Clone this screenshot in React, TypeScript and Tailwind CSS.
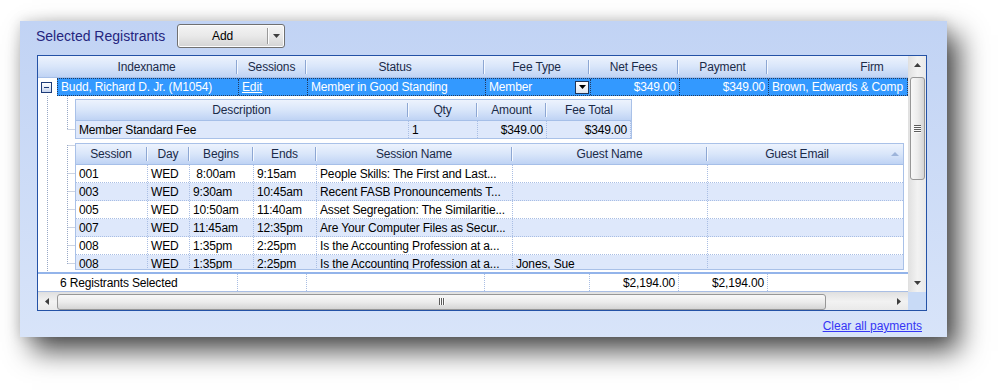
import React from 'react';

type Col = { label: string; w: string; sort?: boolean; right?: boolean };

const mainCols: Col[] = [
  { label: 'Indexname', w: 'w-[181px]' },
  { label: 'Sessions', w: 'w-[69px]' },
  { label: 'Status', w: 'w-[178px]' },
  { label: 'Fee Type', w: 'w-[105px]' },
  { label: 'Net Fees', w: 'w-[89px]', right: true },
  { label: 'Payment', w: 'w-[89px]', right: true },
  { label: 'Firm', w: 'w-[208px]' },
];

const feeCols: Col[] = [
  { label: 'Description', w: 'w-[333px]' },
  { label: 'Qty', w: 'w-[69px]' },
  { label: 'Amount', w: 'w-[69px]', right: true },
  { label: 'Fee Total', w: 'w-[84px]', right: true },
];

const sessionCols: Col[] = [
  { label: 'Session', w: 'w-[72px]' },
  { label: 'Day', w: 'w-[42px]' },
  { label: 'Begins', w: 'w-[64px]' },
  { label: 'Ends', w: 'w-[63px]' },
  { label: 'Session Name', w: 'w-[196px]' },
  { label: 'Guest Name', w: 'w-[195px]' },
  { label: 'Guest Email', w: 'w-[196px]', sort: true },
];

const sessions = [
  ['001', 'WED', '\u00a08:00am', '9:15am', 'People Skills: The First and Last...', ''],
  ['003', 'WED', '9:30am', '10:45am', 'Recent FASB Pronouncements T...', ''],
  ['005', 'WED', '10:50am', '11:40am', 'Asset Segregation: The Similaritie...', ''],
  ['007', 'WED', '11:45am', '12:35pm', 'Are Your Computer Files as Secur...', ''],
  ['008', 'WED', '1:35pm', '2:25pm', 'Is the Accounting Profession at a...', ''],
  ['008', 'WED', '1:35pm', '2:25pm', 'Is the Accounting Profession at a...', 'Jones, Sue'],
];

const HeaderRow = ({ cols, height }: { cols: Col[]; height: string }) => (
  <div className={`flex shrink-0 ${height} bg-gradient-to-b from-[#edf3fd] via-[#d9e6fa] to-[#bfd3f4] border-b border-[#a6bfe8] text-[#1b2b49]`}>
    {cols.map((c, i) => (
      <div key={c.label} className={`${c.w} shrink-0 flex items-center`}>
        <span className="flex-1 text-center whitespace-nowrap overflow-hidden">{c.label}</span>
        {c.sort && (
          <span className="w-[18px] shrink-0 flex items-center justify-center">
            <svg width="8" height="4" viewBox="0 0 8 4"><path d="M0 4 L4 0 L8 4 Z" fill="#9db4da" /></svg>
          </span>
        )}
        {i < cols.length - 1 && (
          <span className="w-[2px] h-[14px] shrink-0 border-l border-l-[#8da7d3] border-r border-r-[#f5f9ff]" />
        )}
      </div>
    ))}
  </div>
);

const Cell = ({ w, right, children, cls = 'border-[#a9bee4]' }: { w: string; right?: boolean; children?: React.ReactNode; cls?: string }) => (
  <div className={`${w} shrink-0 h-full flex items-center overflow-hidden whitespace-nowrap border-r border-dotted ${cls} ${right ? 'justify-end pr-[3px]' : 'pl-[3px]'}`}>
    {children}
  </div>
);

const TreeLines = () => (
  <svg width="37" height="176" className="shrink-0">
    <g stroke="#98a8c6" strokeWidth="1" strokeDasharray="1 1">
      <line x1="9.5" y1="0" x2="9.5" y2="176" />
      <line x1="29.5" y1="0" x2="29.5" y2="33" />
      <line x1="29.5" y1="33.5" x2="37" y2="33.5" />
      <line x1="29.5" y1="49" x2="29.5" y2="168" />
      <line x1="29.5" y1="49.5" x2="37" y2="49.5" />
      {[77, 95, 113, 131, 149, 167].map(y => (
        <line key={y} x1="29.5" y1={y + 0.5} x2="37" y2={y + 0.5} />
      ))}
    </g>
  </svg>
);

const Arrow = ({ dir }: { dir: 'up' | 'down' | 'left' | 'right' }) => {
  const d = {
    up: 'M0 4 L3.5 0 L7 4 Z',
    down: 'M0 0 L7 0 L3.5 4 Z',
    left: 'M4 0 L4 7 L0 3.5 Z',
    right: 'M0 0 L4 3.5 L0 7 Z',
  }[dir];
  const v = dir === 'up' || dir === 'down';
  return (
    <svg width={v ? 7 : 4} height={v ? 4 : 7} viewBox={v ? '0 0 7 4' : '0 0 4 7'}>
      <path d={d} fill="#3e3e3e" />
    </svg>
  );
};

const VScroll = () => (
  <div className="w-[18px] shrink-0 flex flex-col bg-gradient-to-r from-[#e2e2e2] via-[#f2f2f2] to-[#e9e9e9] border-l border-[#e0e0e0]">
    <div className="h-[18px] shrink-0 flex items-center justify-center"><Arrow dir="up" /></div>
    <div className="mt-[3px] mx-px h-[103px] shrink-0 rounded-[3px] border border-[#979797] bg-gradient-to-r from-[#f8f8f8] via-[#ececec] to-[#d5d5d5] flex flex-col items-center justify-center">
      {[0, 1, 2, 3].map(i => (
        <span key={i} className="w-[7px] h-[2px] border-t border-t-[#5c5c5c] border-b border-b-[#fbfbfb]" />
      ))}
    </div>
    <div className="flex-1" />
    <div className="h-[18px] shrink-0 flex items-center justify-center"><Arrow dir="down" /></div>
  </div>
);

const HScroll = () => (
  <div className="w-[870px] h-full flex items-center bg-gradient-to-b from-[#e2e2e2] via-[#f2f2f2] to-[#e9e9e9] border-t border-[#e0e0e0]">
    <div className="w-[18px] h-full shrink-0 flex items-center justify-center"><Arrow dir="left" /></div>
    <div className="ml-px w-[769px] h-[16px] shrink-0 rounded-[3px] border border-[#979797] bg-gradient-to-b from-[#f8f8f8] via-[#ececec] to-[#d5d5d5] flex items-center justify-center">
      {[0, 1, 2].map(i => (
        <span key={i} className="w-[2px] h-[7px] border-l border-l-[#5c5c5c] border-r border-r-[#fbfbfb]" />
      ))}
    </div>
    <div className="flex-1" />
    <div className="w-[18px] h-full shrink-0 flex items-center justify-center"><Arrow dir="right" /></div>
  </div>
);

export default function App() {
  const sel = 'border-[#233a5e]';
  return (
    <div className="w-[1001px] h-[392px] bg-white overflow-hidden pl-[20px] pt-[21px] font-['Liberation_Sans',Arial,sans-serif] text-[12px] tracking-[-0.15px] text-black">
      <div className="w-[927px] h-[316px] flex flex-col bg-gradient-to-b from-[#c1d3f4] to-[#d8e4f9] shadow-[12px_14px_26px_rgba(0,0,0,0.7),0_0_12px_rgba(0,0,0,0.14)]">
        {/* title bar */}
        <div className="mt-[3px] h-[24px] flex items-center pl-[16px] shrink-0">
          <span className="w-[141px] text-[14px] tracking-normal text-[#25257e]">Selected Registrants</span>
          <div className="w-[108px] h-[24px] flex rounded-[3px] border border-[#707070] bg-gradient-to-b from-[#f4f4f4] via-[#e9e9e9] to-[#d3d3d3] shadow-[inset_0_0_0_1px_#fcfcfc]">
            <span className="w-[89px] flex items-center justify-center text-[12px]">Add</span>
            <span className="w-[2px] my-[3px] border-l border-l-[#9a9a9a] border-r border-r-[#fdfdfd]" />
            <span className="flex-1 flex items-center justify-center"><Arrow dir="down" /></span>
          </div>
        </div>

        {/* grid */}
        <div className="mt-[7px] ml-[17px] w-[890px] h-[256px] shrink-0 border border-[#2452a6] bg-white flex flex-col">
          <div className="flex h-[236px]">
            <div className="w-[870px] shrink-0 overflow-hidden flex flex-col">
              <div className="flex h-[22px] shrink-0">
                <div className="w-[19px] shrink-0 bg-gradient-to-b from-[#edf3fd] via-[#d9e6fa] to-[#bfd3f4] border-b border-[#a6bfe8]" />
                <HeaderRow cols={mainCols} height="h-[22px]" />
              </div>

              {/* selected master row */}
              <div className="flex h-[18px] shrink-0">
                <div className="w-[19px] shrink-0 flex items-center pl-[3px]">
                  <div className="w-[11px] h-[11px] border border-[#1e3c78] bg-gradient-to-b from-white to-[#c9d6ee] flex items-center justify-center">
                    <span className="w-[5px] h-px bg-[#1e3c78]" />
                  </div>
                </div>
                <div className={`flex h-full bg-[#3399ff] text-white border-y border-l border-dotted ${sel}`}>
                  <Cell w="w-[181px]" cls={sel}>Budd, Richard D. Jr. (M1054)</Cell>
                  <Cell w="w-[69px]" cls={sel}><span className="underline">Edit</span></Cell>
                  <Cell w="w-[178px]" cls={sel}>Member in Good Standing</Cell>
                  <Cell w="w-[105px]" cls={sel}>
                    <span className="flex-1">Member</span>
                    <span className="w-[14px] h-[13px] mr-px border border-[#1e3459] bg-gradient-to-b from-white to-[#dfe5ef] flex items-center justify-center">
                      <svg width="7" height="4" viewBox="0 0 7 4"><path d="M0 0 L7 0 L3.5 4 Z" fill="#000" /></svg>
                    </span>
                  </Cell>
                  <Cell w="w-[89px]" right cls={sel}>$349.00</Cell>
                  <Cell w="w-[89px]" right cls={sel}>$349.00</Cell>
                  <Cell w="w-[139px]" cls={sel}>Brown, Edwards &amp; Comp</Cell>
                </div>
              </div>

              {/* detail */}
              <div className="flex h-[176px] shrink-0">
                <TreeLines />
                <div className="flex-1 flex flex-col pt-[3px] pb-[2px] overflow-hidden">
                  <div className="w-[557px] shrink-0 border-x border-t border-[#a9c1e8]">
                    <HeaderRow cols={feeCols} height="h-[21px]" />
                    <div className="flex h-[18px] bg-[#dee8fb] border-b border-[#a9c1e8]">
                      <Cell w="w-[333px]">Member Standard Fee</Cell>
                      <Cell w="w-[69px]">1</Cell>
                      <Cell w="w-[69px]" right>$349.00</Cell>
                      <Cell w="w-[84px]" right>$349.00</Cell>
                    </div>
                  </div>
                  <div className="mt-[4px] w-[829px] flex-1 min-h-0 overflow-hidden flex flex-col border-x border-t border-b border-[#a9c1e8]">
                    <HeaderRow cols={sessionCols} height="h-[21px]" />
                    {sessions.map((r, i) => (
                      <div key={i} className={`flex h-[18px] shrink-0 border-b border-dotted border-[#a9bee4] ${i % 2 ? 'bg-[#dee8fb]' : 'bg-white'}`}>
                        {sessionCols.map((c, j) => (
                          <Cell key={c.label} w={c.w}>{r[j]}</Cell>
                        ))}
                      </div>
                    ))}
                  </div>
                </div>
              </div>

              {/* footer */}
              <div className="flex h-[20px] shrink-0 border-t-2 border-[#93b4ea] border-b border-b-[#a9bee4]">
                <div className="w-[200px] shrink-0 h-full flex items-center pl-[22px] border-r border-dotted border-[#a9bee4]">6 Registrants Selected</div>
                <Cell w="w-[69px]" />
                <Cell w="w-[178px]" />
                <Cell w="w-[105px]" />
                <Cell w="w-[89px]" right>$2,194.00</Cell>
                <Cell w="w-[89px]" right>$2,194.00</Cell>
                <Cell w="w-[208px]" />
              </div>
            </div>
            <VScroll />
          </div>
          <div className="flex h-[18px]">
            <HScroll />
            <div className="flex-1 bg-[#c8daf6]" />
          </div>
        </div>

        <div className="mt-[6px] pr-[25px] flex justify-end shrink-0">
          <span className="text-[#3535f5] underline tracking-normal">Clear all payments</span>
        </div>
      </div>
    </div>
  );
}
